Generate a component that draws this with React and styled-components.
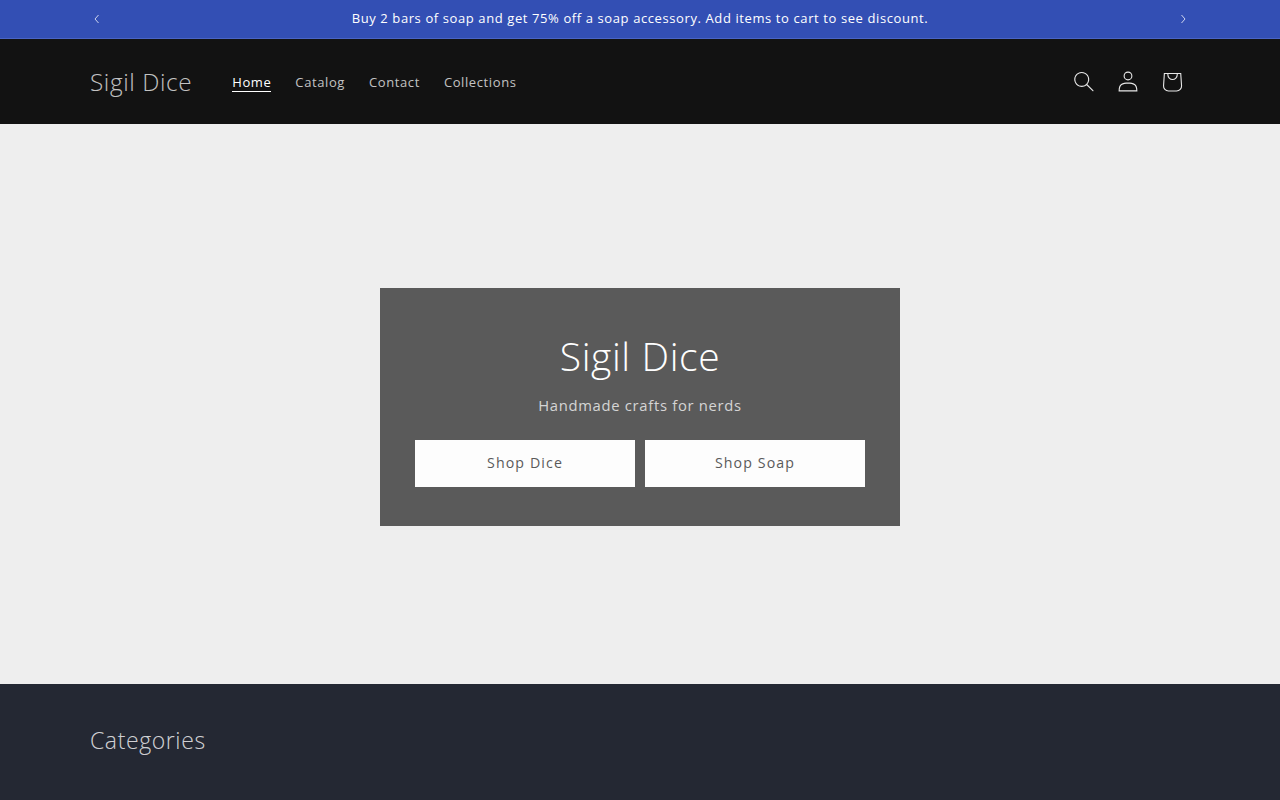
import React from 'react';
import styled, { createGlobalStyle } from 'styled-components';

const Global = createGlobalStyle`
  html, body { margin: 0; padding: 0; height: 800px; overflow: hidden; background: #eeeeee; }
  body { font-family: "Open Sans", "Liberation Sans", sans-serif; }
  * { box-sizing: border-box; }
`;

const Announcement = styled.div`
  height: 39px;
  background: #334fb4;
  border-bottom: 1px solid #4a64c4;
  padding: 0 90px;
  display: flex;
  align-items: center;
  justify-content: space-between;
`;
const ArrowButton = styled.button`
  width: 14px;
  height: 38px;
  padding: 0;
  border: 0;
  background: none;
  color: rgba(255,255,255,.75);
  display: flex;
  align-items: center;
  justify-content: center;
`;
const AnnouncementText = styled.p`
  margin: 0 0 2px;
  flex: 1;
  text-align: center;
  color: #fff;
  font-size: 13px;
  line-height: 36px;
  letter-spacing: 0.6px;
`;
const Header = styled.header`
  height: 85px;
  background: #121212;
  padding: 0 90px;
  display: flex;
  align-items: center;
  justify-content: space-between;
`;
const Left = styled.div`
  display: flex;
  align-items: center;
`;
const Logo = styled.a`
  color: rgba(255,255,255,.75);
  font-size: 24.3px;
  font-weight: 350;
  letter-spacing: 0.6px;
  line-height: 34px;
  margin-right: 40px;
`;
const Nav = styled.nav`
  display: flex;
  gap: 24px;
`;
const NavLink = styled.a`
  color: ${p => (p.$active ? '#fff' : 'rgba(255,255,255,.75)')};
  font-size: 13px;
  line-height: 20px;
  letter-spacing: 0.6px;
  ${p => p.$active && 'border-bottom: 1px solid #fff;'}
  height: 20px;
`;
const Icons = styled.div`
  display: flex;
  margin-right: -4px;
`;
const IconButton = styled.button`
  width: 44px;
  height: 44px;
  padding: 0;
  border: 0;
  background: none;
  color: rgba(255,255,255,.9);
  display: flex;
  align-items: center;
  justify-content: center;
`;
const Hero = styled.section`
  height: 560px;
  background: #eeeeee;
  display: flex;
  align-items: center;
  justify-content: center;
`;
const Card = styled.div`
  width: 520px;
  height: 238px;
  background: #5a5a5a;
  padding: 40px 35px;
  display: flex;
  flex-direction: column;
  align-items: center;
  position: relative;
  top: 2.5px;
`;
const Title = styled.h1`
  margin: 0;
  color: #fff;
  font-weight: 350;
  font-size: 39px;
  line-height: 56px;
  letter-spacing: 0.6px;
`;
const Subtitle = styled.p`
  margin: 9px 0 0;
  color: rgba(255,255,255,.75);
  font-size: 14.8px;
  font-weight: 400;
  line-height: 24px;
  letter-spacing: 0.7px;
`;
const Buttons = styled.div`
  margin-top: 23px;
  display: flex;
  gap: 10px;
  width: 100%;
`;
const CardButton = styled.a`
  flex: 1;
  height: 47px;
  padding-bottom: 2px;
  background: #fdfdfd;
  color: #5a5a5a;
  font-size: 14.2px;
  letter-spacing: 1.1px;
  display: flex;
  align-items: center;
  justify-content: center;
`;
const Section = styled.section`
  height: 116px;
  background: #242833;
  padding: 38px 90px 0;
`;
const SectionTitle = styled.h2`
  margin: 0;
  color: rgba(255,255,255,.8);
  font-weight: 350;
  font-size: 23px;
  line-height: 36px;
  letter-spacing: 0.6px;
`;

const Chevron = ({ left }) => (
  <svg width="10" height="10" viewBox="0 0 10 10" fill="none" stroke="currentColor" strokeWidth="1">
    <path d={left ? 'M6.5 1 L3 5 L6.5 9' : 'M3.5 1 L7 5 L3.5 9'} />
  </svg>
);

export default function App() {
  return (
    <>
      <Global />
      <Announcement>
        <ArrowButton aria-label="Previous"><Chevron left /></ArrowButton>
        <AnnouncementText>Buy 2 bars of soap and get 75% off a soap accessory. Add items to cart to see discount.</AnnouncementText>
        <ArrowButton aria-label="Next"><Chevron /></ArrowButton>
      </Announcement>
      <Header>
        <Left>
          <Logo>Sigil Dice</Logo>
          <Nav>
            <NavLink $active>Home</NavLink>
            <NavLink>Catalog</NavLink>
            <NavLink>Contact</NavLink>
            <NavLink>Collections</NavLink>
          </Nav>
        </Left>
        <Icons>
          <IconButton aria-label="Search">
            <svg width="20" height="21" viewBox="0 0 18 19" fill="currentColor">
              <path fillRule="evenodd" clipRule="evenodd" d="M11.03 11.68A5.784 5.784 0 112.85 3.5a5.784 5.784 0 018.18 8.18zm.26 1.12a6.78 6.78 0 11.72-.7l5.4 5.4a.5.5 0 11-.71.7l-5.41-5.4z" />
            </svg>
          </IconButton>
          <IconButton aria-label="Account">
            <svg width="20" height="21" viewBox="0 0 18 19" fill="currentColor">
              <path fillRule="evenodd" clipRule="evenodd" d="M6 4.5a3 3 0 116 0 3 3 0 01-6 0zm3-4a4 4 0 100 8 4 4 0 000-8zm5.58 12.15c1.12.82 1.83 2.24 1.91 4.85H1.51c.08-2.6.79-4.03 1.9-4.85C4.66 11.75 6.5 11.5 9 11.5s4.35.26 5.58 1.15zM9 10.5c-2.5 0-4.65.24-6.17 1.35C1.27 12.98.5 14.93.5 18v.5h17V18c0-3.07-.77-5.02-2.33-6.15-1.52-1.1-3.67-1.35-6.17-1.35z" />
            </svg>
          </IconButton>
          <IconButton aria-label="Cart">
            <svg width="44" height="44" viewBox="0 0 40 40" fill="currentColor">
              <path fillRule="evenodd" clipRule="evenodd" d="m15.75 11.8h-3.16l-.77 11.6a5 5 0 0 0 4.99 5.34h7.38a5 5 0 0 0 4.99-5.33l-.78-11.61zm0 1h-2.22l-.71 10.67a4 4 0 0 0 3.99 4.27h7.38a4 4 0 0 0 4-4.27l-.72-10.67h-2.22v.63a4.75 4.75 0 1 1 -9.5 0zm8.5 0h-7.5v.63a3.75 3.75 0 1 0 7.5 0z" />
            </svg>
          </IconButton>
        </Icons>
      </Header>
      <Hero>
        <Card>
          <Title>Sigil Dice</Title>
          <Subtitle>Handmade crafts for nerds</Subtitle>
          <Buttons>
            <CardButton>Shop Dice</CardButton>
            <CardButton>Shop Soap</CardButton>
          </Buttons>
        </Card>
      </Hero>
      <Section>
        <SectionTitle>Categories</SectionTitle>
      </Section>
    </>
  );
}
